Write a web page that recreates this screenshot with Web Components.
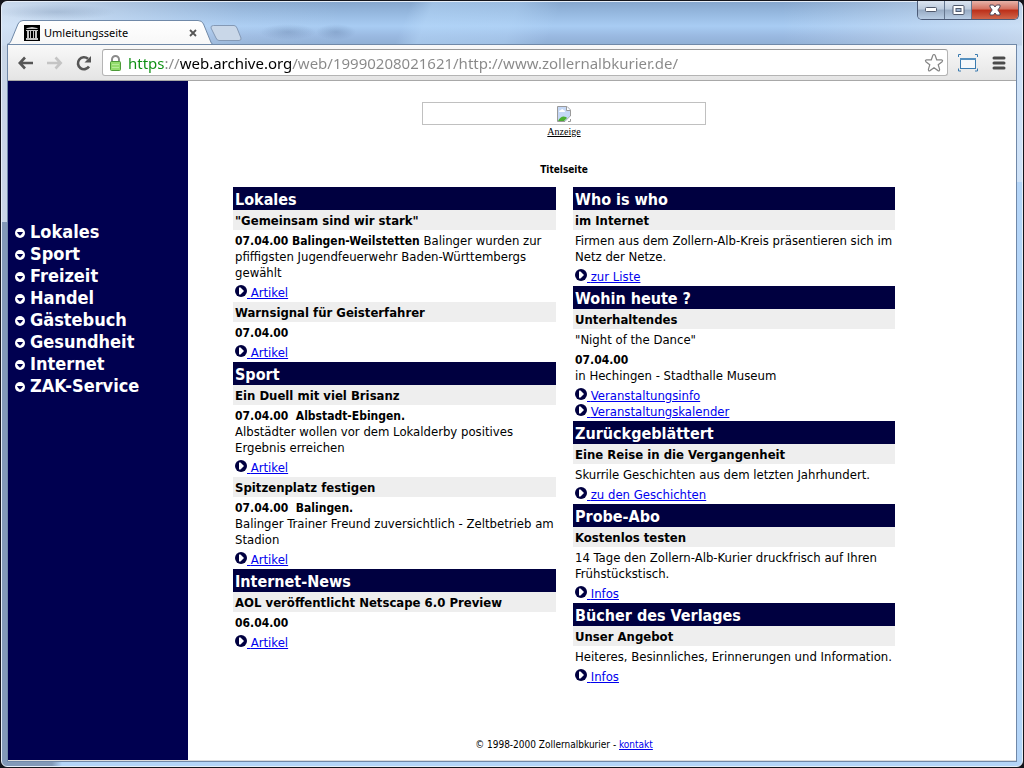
<!DOCTYPE html>
<html lang="de">
<head>
<meta charset="utf-8">
<title>Umleitungsseite</title>
<style>
  html, body {
    margin: 0;
    height: 100%;
  }

  body {
    font-family: "DejaVu Sans Condensed", Tahoma, sans-serif;
    font-size: 13px;
    line-height: 16px;
    color: #000;
    background: #14151c;
  }
</style>
</head>
<body>
  <browser-window>
    <tab-strip slot="tabs">Umleitungsseite</tab-strip>
    <tool-bar slot="toolbar" url="https://web.archive.org/web/19990208021621/http://www.zollernalbkurier.de/"></tool-bar>

    <side-nav>
      <nav-entry>Lokales</nav-entry>
      <nav-entry>Sport</nav-entry>
      <nav-entry>Freizeit</nav-entry>
      <nav-entry>Handel</nav-entry>
      <nav-entry>Gästebuch</nav-entry>
      <nav-entry>Gesundheit</nav-entry>
      <nav-entry>Internet</nav-entry>
      <nav-entry>ZAK-Service</nav-entry>
    </side-nav>

    <front-page>
      <ad-banner slot="ad">Anzeige</ad-banner>
      <span slot="title">Titelseite</span>

      <news-section slot="left" heading="Lokales">
        <news-item heading="&quot;Gemeinsam sind wir stark&quot;">
          <p><date-line>07.04.00 Balingen-Weilstetten</date-line> Balinger wurden zur pfiffigsten Jugendfeuerwehr Baden-Württembergs gewählt</p>
          <more-link slot="links">Artikel</more-link>
        </news-item>
        <news-item heading="Warnsignal für Geisterfahrer">
          <p><date-line>07.04.00</date-line></p>
          <more-link slot="links">Artikel</more-link>
        </news-item>
      </news-section>
      <news-section slot="left" heading="Sport">
        <news-item heading="Ein Duell mit viel Brisanz">
          <p><date-line>07.04.00&nbsp; Albstadt-Ebingen.</date-line><br>Albstädter wollen vor dem Lokalderby positives Ergebnis erreichen</p>
          <more-link slot="links">Artikel</more-link>
        </news-item>
        <news-item heading="Spitzenplatz festigen">
          <p><date-line>07.04.00&nbsp; Balingen.</date-line><br>Balinger Trainer Freund zuversichtlich - Zeltbetrieb am Stadion</p>
          <more-link slot="links">Artikel</more-link>
        </news-item>
      </news-section>
      <news-section slot="left" heading="Internet-News">
        <news-item heading="AOL veröffentlicht Netscape 6.0 Preview">
          <p><date-line>06.04.00</date-line></p>
          <more-link slot="links">Artikel</more-link>
        </news-item>
      </news-section>

      <news-section slot="right" heading="Who is who">
        <news-item heading="im Internet">
          <p>Firmen aus dem Zollern-Alb-Kreis präsentieren sich im Netz der Netze.</p>
          <more-link slot="links">zur Liste</more-link>
        </news-item>
      </news-section>
      <news-section slot="right" heading="Wohin heute ?">
        <news-item heading="Unterhaltendes">
          <p>"Night of the Dance"</p>
          <p><date-line>07.04.00</date-line><br>in Hechingen - Stadthalle Museum</p>
          <more-link slot="links">Veranstaltungsinfo</more-link>
          <more-link slot="links">Veranstaltungskalender</more-link>
        </news-item>
      </news-section>
      <news-section slot="right" heading="Zurückgeblättert">
        <news-item heading="Eine Reise in die Vergangenheit">
          <p>Skurrile Geschichten aus dem letzten Jahrhundert.</p>
          <more-link slot="links">zu den Geschichten</more-link>
        </news-item>
      </news-section>
      <news-section slot="right" heading="Probe-Abo">
        <news-item heading="Kostenlos testen">
          <p>14 Tage den Zollern-Alb-Kurier druckfrisch auf Ihren Frühstückstisch.</p>
          <more-link slot="links">Infos</more-link>
        </news-item>
      </news-section>
      <news-section slot="right" heading="Bücher des Verlages">
        <news-item heading="Unser Angebot">
          <p>Heiteres, Besinnliches, Erinnerungen und Information.</p>
          <more-link slot="links">Infos</more-link>
        </news-item>
      </news-section>

      <page-footer slot="footer">© 1998-2000 Zollernalbkurier - </page-footer>
    </front-page>
  </browser-window>

<script>
  // Small base class: every element below only supplies its markup
  class BaseElement extends HTMLElement {
    constructor() {
      super();
      this.attachShadow({ mode: 'open' });
      this.shadowRoot.innerHTML = this.template();
    }

    template() {
      return '<slot></slot>';
    }
  }

  class BrowserWindow extends BaseElement {
    template() {
      return `
        <style>
          :host {
            display: flex;
            flex-direction: column;
            box-sizing: border-box;
            min-height: 100vh;
            padding: 1px;
          }

          .glass {
            flex: 1;
            display: flex;
            flex-direction: column;
            box-sizing: border-box;
            border: 1px solid #e6eef8;
            border-radius: 6px;
            padding: 0 5px 4px;
            background:
              radial-gradient(ellipse 60px 8px at 54px 10px, rgba(90, 115, 150, .25), transparent),
              radial-gradient(ellipse 28px 8px at 286px 30px, rgba(70, 95, 135, .25), transparent),
              radial-gradient(ellipse 20px 8px at 334px 30px, rgba(70, 95, 135, .25), transparent),
              linear-gradient(90deg, rgba(225, 235, 247, .75), rgba(225, 235, 247, .1) 240px, transparent 340px) 0 0 / 100% 220px no-repeat,
              linear-gradient(270deg, rgba(225, 235, 247, .6), transparent 240px) 0 0 / 100% 180px no-repeat,
              linear-gradient(112deg, transparent 380px, rgba(185, 218, 250, .5) 400px, rgba(185, 218, 250, .4) 480px, transparent 520px) 0 0 / 100% 44px no-repeat,
              linear-gradient(#86a7ce, #a8ccf3 24px, #9ab9e1 34px, #8fafd4 43px, transparent 44px),
              linear-gradient(90deg, #8299b8 50px, #b4d5f8 60px);
          }

          header {
            display: flex;
            align-items: flex-end;
            height: 42px;
          }

          .caption {
            display: flex;
            align-self: flex-start;
            margin: -1px -2px 0 auto;
            border: 1px solid #4c5b77;
            border-top: 0;
            border-radius: 0 0 5px 5px;
            overflow: hidden;
          }

          .caption button {
            display: grid;
            place-items: center;
            width: 27px;
            height: 18px;
            padding: 0;
            border: 0;
            border-right: 1px solid #65768f;
            background: linear-gradient(#dbe4f0, #bccbdd 45%, #98abc4 50%, #b9cde4);
          }

          .caption .close {
            width: 46px;
            border: 0;
            background: linear-gradient(#e7b3a9, #d4705f 45%, #bc2e18 50%, #d0664b);
          }

          .client {
            flex: 1;
            display: flex;
            flex-direction: column;
            border: 1px solid #7088a8;
            border-top: 0;
            background: #fff;
          }

          main {
            flex: 1;
            display: flex;
            border-bottom: 1px solid #dcdcdc;
          }
        </style>

        <div class="glass">
          <header>
            <slot name="tabs"></slot>
            <div class="caption">
              <button type="button" aria-label="Minimieren">
                <svg width="14" height="6" viewBox="0 0 14 6"><rect x="1.500" y=".500" width="11" height="4" rx="1" fill="#fff" stroke="#50596c"/></svg>
              </button>
              <button type="button" aria-label="Maximieren">
                <svg width="13" height="11" viewBox="0 0 13 11"><rect x="1" y=".500" width="11" height="9" rx="1" fill="#fff" stroke="#50596c"/><rect x="4" y="3.500" width="5" height="3" fill="#9db4d2" stroke="#50596c"/></svg>
              </button>
              <button type="button" class="close" aria-label="Schließen">
                <svg width="14" height="12" viewBox="0 0 14 12"><path d="M2 1h3.500L7 3l1.500-2H12v2L9.800 6 12 9v2H8.500L7 9l-1.500 2H2V9l2.200-3L2 3z" fill="#fff" stroke="#50485a"/></svg>
              </button>
            </div>
          </header>
          <div class="client">
            <slot name="toolbar"></slot>
            <main><slot></slot></main>
          </div>
        </div>
      `;
    }
  }

  class TabStrip extends BaseElement {
    template() {
      return `
        <style>
          :host {
            display: flex;
            align-items: flex-end;
            font: 11px/16px "Noto Sans", sans-serif;
          }

          .tab {
            display: grid;
            width: 206px;
            height: 25px;
            margin-bottom: -1px;
          }

          .tab > * {
            grid-area: 1 / 1;
          }

          .label {
            display: flex;
            align-items: center;
            gap: 4px;
            padding: 0 16px 0 17px;
          }

          .text {
            flex: 1;
          }

          button {
            display: grid;
            padding: 0;
            border: 0;
            background: none;
          }

          .new {
            margin: 0 0 3px -3px;
          }
        </style>

        <div class="tab">
          <svg width="206" height="25" viewBox="0 0 206 25">
            <defs><linearGradient id="g" x2="0" y2="1"><stop stop-color="#fff"/><stop offset="1" stop-color="#f7f7f7"/></linearGradient></defs>
            <path d="M0 25V24.500Q3 24 4 21L11 4Q12.500.500 16 .500H191Q195 .500 196.500 4L203 20Q204.500 24.500 206 24.500V25z" fill="url(#g)"/>
            <path d="M0 24.500Q3 24 4 21L11 4Q12.500.500 16 .500H191Q195 .500 196.500 4L203 20Q204.500 24.500 206 24.500" fill="none" stroke="#7089a8"/>
          </svg>
          <div class="label">
            <svg width="16" height="16" viewBox="0 0 16 16">
              <rect width="16" height="16" fill="#000"/>
              <path d="M2 4l1-1 5-1 5 1 1 1zM2 5h12v1H2zM3 6h2v7H3zM6 6h1v7H6zM9 6h1v7H9zM11 6h2v7h-2zM2 13h12v2H2z" fill="#c4c4c4"/>
            </svg>
            <span class="text"><slot></slot></span>
            <button type="button" aria-label="Tab schließen">
              <svg width="8" height="8" viewBox="0 0 8 8"><path d="M1 1l6 6M7 1L1 7" stroke="#555" stroke-width="1.800"/></svg>
            </button>
          </div>
        </div>
        <button type="button" class="new" aria-label="Neuer Tab">
          <svg width="32" height="16" viewBox="0 0 32 16"><path d="M3.500.500H24Q26 .500 27 3L31 13Q31.500 15.500 29 15.500H9Q7 15.500 6 13L1 3Q.500.500 3.500.500z" fill="#c9d7e8" stroke="#8499b5"/></svg>
        </button>
      `;
    }
  }

  class ToolBar extends BaseElement {
    connectedCallback() {
      this.shadowRoot.querySelector('input').value = this.getAttribute('url');
    }

    template() {
      return `
        <style>
          :host {
            display: flex;
            align-items: center;
            gap: 10px;
            box-sizing: border-box;
            height: 37px;
            padding: 0 10px;
            border-top: 1px solid #7089a8;
            border-bottom: 1px solid #a8a8a8;
            background: linear-gradient(#f9f9f9, #e4e4e4);
          }

          button {
            display: grid;
            padding: 0;
            border: 0;
            background: none;
          }

          .nav {
            display: flex;
            gap: 13px;
          }

          .omnibox {
            flex: 1;
            display: flex;
            align-items: center;
            gap: 6px;
            box-sizing: border-box;
            height: 27px;
            padding: 0 3px 0 6px;
            border: 1px solid #b4b4b4;
            border-top-color: #999;
            border-radius: 3px;
            background: #fff;
          }

          /* scheme green, host black, the rest grey */
          input {
            flex: 1;
            min-width: 0;
            height: 24px;
            padding: 0;
            border: 0;
            outline: 0;
            font: 15px/24px "Noto Sans", sans-serif;
            color: transparent;
            background: linear-gradient(90deg, #0b8e10 37px, #888 37px 52px, #000 52px 164px, #888 164px);
            -webkit-background-clip: text;
            background-clip: text;
          }

          .menu {
            margin-left: 4px;
          }
        </style>

        <div class="nav">
          <button type="button" aria-label="Zurück">
            <svg width="16" height="16" viewBox="0 0 16 16"><path d="M7 2.500L1.800 8 7 13.500M2 8h13" fill="none" stroke="#555" stroke-width="2.600"/></svg>
          </button>
          <button type="button" aria-label="Vorwärts">
            <svg width="16" height="16" viewBox="0 0 16 16"><path d="M8.500 2.500L13.700 8l-5.200 5.500M13.500 8H0" fill="none" stroke="#c4c4c4" stroke-width="2.600"/></svg>
          </button>
          <button type="button" aria-label="Neu laden">
            <svg width="16" height="16" viewBox="0 0 16 16"><path d="M13 11.500A6 6 0 1 1 12 3.800" fill="none" stroke="#555" stroke-width="2.600"/><path d="M15 1v6.500H8.500z" fill="#555"/></svg>
          </button>
        </div>
        <div class="omnibox">
          <svg width="13" height="16" viewBox="0 0 13 16">
            <path d="M3 7V4.500a3.500 3.500 0 0 1 7 0V7" fill="none" stroke="#8b8b8b" stroke-width="2"/>
            <rect x="1.500" y="6.500" width="10" height="9" rx="1" fill="#93dc6c" stroke="#4c9a38"/>
            <path d="M3 9.500h7M3 12.500h7" stroke="#b6eb98"/>
          </svg>
          <input type="text" aria-label="Adresse" spellcheck="false">
          <button type="button" aria-label="Lesezeichen">
            <svg width="20" height="20" viewBox="0 0 20 20"><path d="M10 1.500q.800 0 1.200 1l1.500 4.300 4.800.100q1.800.400.600 1.800l-3.900 3 1.400 4.700q.100 1.900-1.600 1.200L10 14.800l-4 2.800q-1.700.700-1.600-1.200l1.400-4.700-3.900-3q-1.200-1.400.600-1.800l4.800-.100L8.800 2.500q.400-1 1.200-1z" fill="#fff" stroke="#858585" stroke-width="1.200"/></svg>
          </button>
        </div>
        <button type="button" aria-label="Fenstergröße">
          <svg width="20" height="18" viewBox="0 0 20 18"><rect x="2.500" y="4.500" width="15" height="10" fill="#f5f8fb" stroke="#3a7bb0"/><path d="M2 4h16v2H2z" fill="#5590bf"/><path d="M.500 3v-2.500h2.500M17 .500h2.500v2.500M.500 14.500v2.500h2.500M17 17h2.500v-2.500" fill="none" stroke="#3a7bb0"/></svg>
        </button>
        <button type="button" class="menu" aria-label="Menü">
          <svg width="14" height="14" viewBox="0 0 14 14"><path d="M2 2h10M2 7h10M2 12h10" stroke="#4a4a4a" stroke-width="3" stroke-linecap="round"/></svg>
        </button>
      `;
    }
  }

  class SideNav extends BaseElement {
    template() {
      return `
        <style>
          :host {
            flex: none;
            display: block;
            box-sizing: border-box;
            width: 180px;
            padding: 140px 7px 0;
            background: #000050;
          }
        </style>
        <nav><slot></slot></nav>
      `;
    }
  }

  class NavEntry extends BaseElement {
    template() {
      return `
        <style>
          :host {
            display: block;
            font: bold 18px/22px "DejaVu Sans Condensed", Tahoma, sans-serif;
          }

          a {
            display: flex;
            align-items: center;
            gap: 5px;
            color: #fff;
            text-decoration: none;
          }

          svg {
            margin-top: 2px;
          }
        </style>
        <a href="#">
          <svg width="10" height="10" viewBox="0 0 10 10"><circle cx="5" cy="5" r="5" fill="#fff"/><path d="M2 4h6Q7.500 5.500 5 7.800 2.500 5.500 2 4z" fill="#000050"/></svg>
          <slot></slot>
        </a>
      `;
    }
  }

  class FrontPage extends BaseElement {
    template() {
      return `
        <style>
          :host {
            flex: 1;
            display: block;
            padding: 21px 45px 0;
          }

          .page {
            max-width: 662px;
          }

          h1 {
            margin: 23px 0 9px;
            font-size: 10px;
            line-height: 16px;
            text-align: center;
          }

          .columns {
            display: grid;
            grid-template-columns: 323fr 322fr;
            gap: 17px;
          }
        </style>
        <div class="page">
          <slot name="ad"></slot>
          <h1><slot name="title"></slot></h1>
          <div class="columns">
            <div><slot name="left"></slot></div>
            <div><slot name="right"></slot></div>
          </div>
          <slot name="footer"></slot>
        </div>
      `;
    }
  }

  class AdBanner extends BaseElement {
    template() {
      return `
        <style>
          :host {
            display: block;
            text-align: center;
            font: 10px/14px "Liberation Serif", serif;
          }

          a {
            color: #000;
          }

          .box {
            display: grid;
            place-items: center;
            width: 282px;
            height: 21px;
            margin: 0 auto;
            border: 1px solid #c0c0c0;
          }
        </style>
        <a href="#">
          <span class="box">
            <svg width="14" height="16" viewBox="0 0 14 16">
              <path d="M.500.500H10L13.500 4v6L8 15.500H.500z" fill="#c5d8f6" stroke="#9a9a9a"/>
              <path d="M9.500.500V4.500h4" fill="#fff" stroke="#9a9a9a"/>
              <path d="M2 6q0-2 2-2 1-2 2.500 0Q8 4 8 6z" fill="#fff"/>
              <path d="M1 15q3-6 8-4l1 1-3 3z" fill="#4caf32"/>
              <path d="M14 10v6H8z" fill="#fff"/>
              <path d="M11 15.500h2.500V13" fill="none" stroke="#9a9a9a"/>
            </svg>
          </span>
          <slot></slot>
        </a>
      `;
    }
  }

  class NewsSection extends BaseElement {
    connectedCallback() {
      this.shadowRoot.querySelector('h2').textContent = this.getAttribute('heading');
    }

    template() {
      return `
        <style>
          :host {
            display: block;
          }

          h2 {
            margin: 0;
            padding: 3px 2px 1px;
            font-size: 16px;
            line-height: 19px;
            color: #fff;
            background: #000040;
          }
        </style>
        <h2></h2>
        <slot></slot>
      `;
    }
  }

  class NewsItem extends BaseElement {
    connectedCallback() {
      this.shadowRoot.querySelector('h3').textContent = this.getAttribute('heading');
    }

    template() {
      return `
        <style>
          :host {
            display: block;
          }

          h3 {
            margin: 0;
            padding: 3px 2px 1px;
            font-size: 13px;
            line-height: 16px;
            background: #eee;
          }

          ::slotted(p) {
            margin: 0;
            padding: 3px 0 1px 2px;
          }

          .links {
            padding: 3px 2px 1px;
          }
        </style>
        <h3></h3>
        <slot></slot>
        <div class="links"><slot name="links"></slot></div>
      `;
    }
  }

  // Bold date and place in front of a story
  class DateLine extends BaseElement {
    template() {
      return `
        <style>
          :host {
            font-size: 12px;
            font-weight: bold;
            line-height: 12px;
          }
        </style><slot></slot>`;
    }
  }

  class MoreLink extends BaseElement {
    template() {
      return `
        <style>
          :host {
            display: block;
            height: 16px;
          }

          a {
            color: #0000ee;
          }
        </style>
        <a href="#"><svg width="12" height="12" viewBox="0 0 12 12"><circle cx="6" cy="6" r="6" fill="#000040"/><path d="M4 2.500h1.500L9 6 5.500 9.500H4z" fill="#fff"/></svg>&nbsp;<slot></slot></a>
      `;
    }
  }

  class PageFooter extends BaseElement {
    template() {
      return `
        <style>
          :host {
            display: block;
            margin-top: 51px;
            font-size: 10px;
            text-align: center;
          }

          a {
            color: #0000ee;
          }
        </style>
        <slot></slot><a href="#">kontakt</a>
      `;
    }
  }

  customElements.define('browser-window', BrowserWindow);
  customElements.define('tab-strip', TabStrip);
  customElements.define('tool-bar', ToolBar);
  customElements.define('side-nav', SideNav);
  customElements.define('nav-entry', NavEntry);
  customElements.define('front-page', FrontPage);
  customElements.define('ad-banner', AdBanner);
  customElements.define('news-section', NewsSection);
  customElements.define('news-item', NewsItem);
  customElements.define('date-line', DateLine);
  customElements.define('more-link', MoreLink);
  customElements.define('page-footer', PageFooter);
</script>
</body>
</html>
